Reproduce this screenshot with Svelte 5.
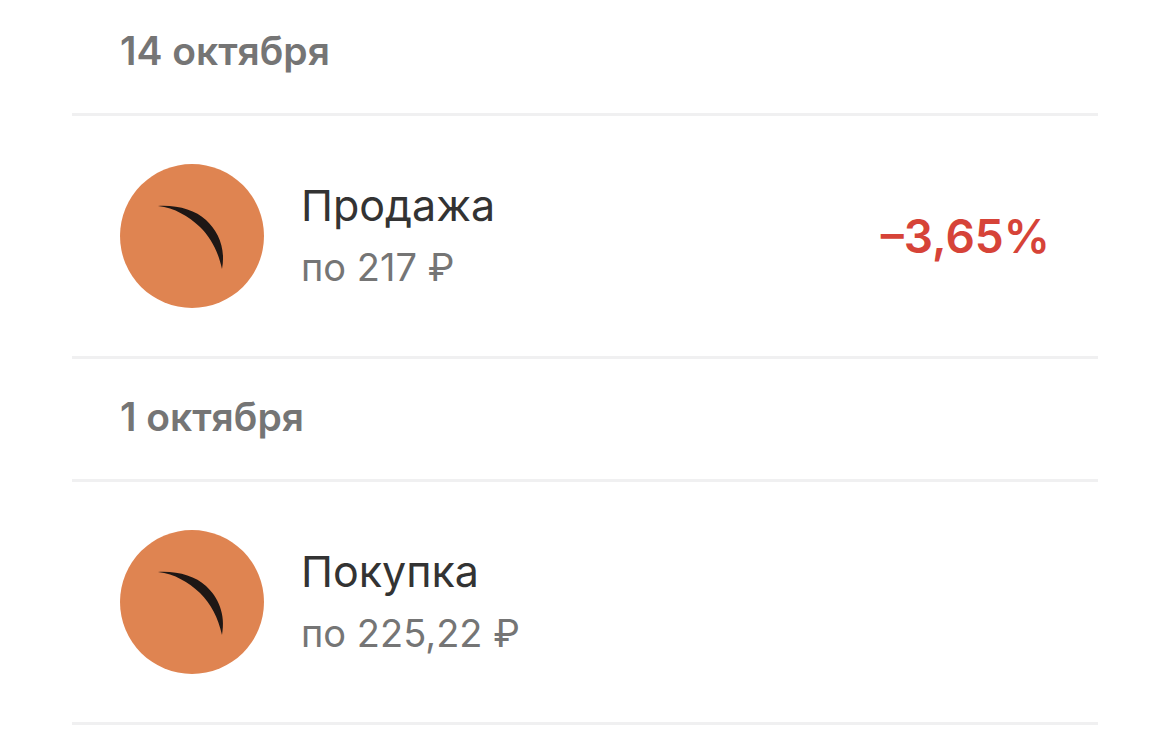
<script>
    const groups = [
        { date: '14 октября', title: 'Продажа', price: 'по 217 ₽', change: '–3,65%' },
        { date: '1 октября', title: 'Покупка', price: 'по 225,22 ₽', change: null },
    ];
</script>

<main>
    {#each groups as group (group.date)}
        <section>
            <h2>{group.date}</h2>
            <div class="operation">
                <svg class="logo" viewBox="0 0 144 144" aria-hidden="true">
                    <circle cx="72" cy="72" r="72" fill="#df8451" />
                    <path d="M38 42C58 41 75 46 86 56C98 67 106 84 102 105C98 87 91 74 80 63C68 52 55 44 38 42Z" fill="#1e1715" />
                </svg>
                <div class="info">
                    <h3>{group.title}</h3>
                    <p>{group.price}</p>
                </div>
                {#if group.change}
                    <strong>{group.change}</strong>
                {/if}
            </div>
        </section>
    {/each}
</main>

<style>
    :global(body) {
        background: #fff;
    }

    main {
        padding: 0 72px;
        font-family: Inter, "Liberation Sans", sans-serif;
    }

    section + section {
        padding-top: 7px;
    }

    h2, h3, p {
        margin: 0;
    }

    h2 {
        padding: 27px 48px 38px;
        border-bottom: 3px solid #f0f0f1;
        color: #757575;
        font-size: 39px;
        font-weight: 600;
        line-height: 48px;
    }

    .operation {
        display: flex;
        align-items: center;
        padding: 48px;
        border-bottom: 3px solid #f0f0f1;
    }

    .logo {
        width: 144px;
        height: 144px;
        flex: none;
    }

    .info {
        flex: 1;
        margin-left: 37px;
    }

    h3, p {
        line-height: 62px;
    }

    h3 {
        color: #333;
        font-size: 43px;
        font-weight: 400;
    }

    p {
        color: #757575;
        font-size: 38px;
    }

    strong {
        color: #d64338;
        font-size: 46px;
        font-weight: 600;
    }
</style>
